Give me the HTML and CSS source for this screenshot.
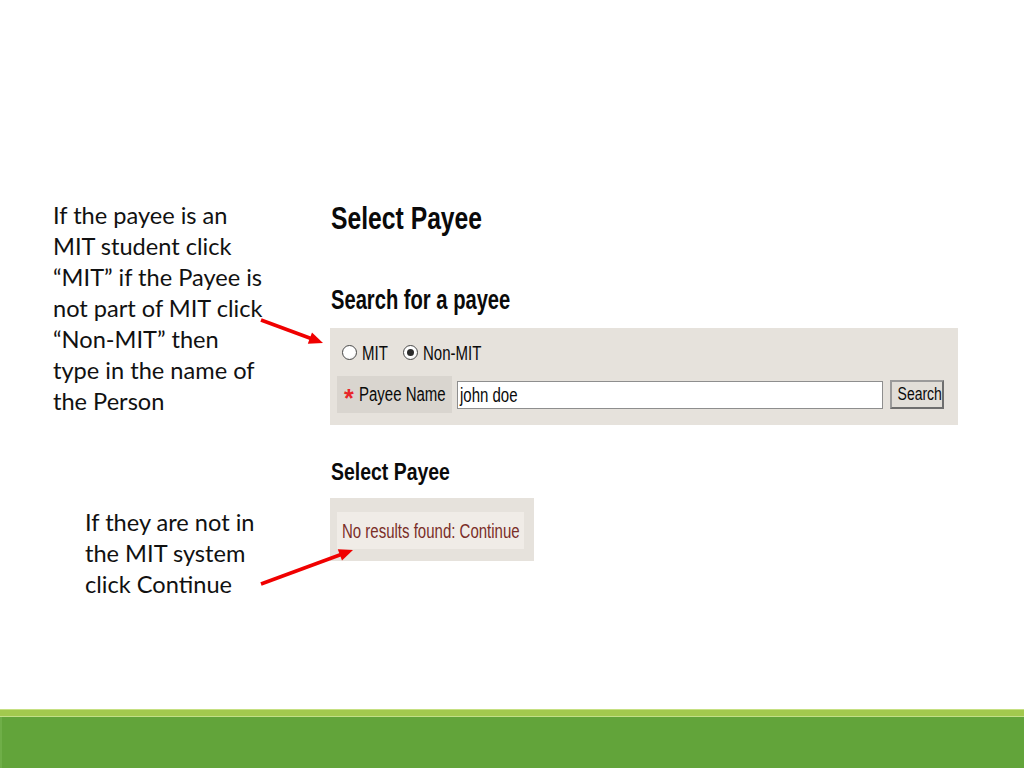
FILE: index.html
```html
<!DOCTYPE html>
<html lang="en">
<head>
<meta charset="utf-8">
<title>Select Payee</title>
<link rel="stylesheet" href="styles.css">
</head>
<body>
<div class="slide">
  <main class="content">
    <section class="row row-search">
      <p class="note note-1">If the payee is an<br>MIT student click<br>“MIT” if the Payee is<br>not part of MIT click<br>“Non-MIT” then<br>type in the name of<br>the Person</p>
      <div class="panel">
        <h1 class="h-select"><span class="squeeze squeeze-h1">Select Payee</span></h1>
        <h2 class="h-search"><span class="squeeze squeeze-h2">Search for a payee</span></h2>
        <div class="search-box">
          <div class="radios">
            <span class="radio"></span><span class="radio-label label-mit"><span class="squeeze">MIT</span></span>
            <span class="radio radio-on"></span><span class="radio-label label-non"><span class="squeeze">Non-MIT</span></span>
          </div>
          <div class="name-row">
            <div class="name-label"><span class="req">*</span><span class="label-text"><span class="squeeze">Payee Name</span></span></div>
            <div class="name-input"><span class="squeeze">john doe</span></div>
            <div class="search-btn"><span class="squeeze squeeze-center">Search</span></div>
          </div>
        </div>
      </div>
    </section>
    <section class="row row-results">
      <p class="note note-2">If they are not in<br>the MIT system<br>click Continue</p>
      <div class="panel">
        <h2 class="h-select2"><span class="squeeze squeeze-h1">Select Payee</span></h2>
        <div class="results-box"><div class="results-inner"><span class="squeeze">No results found: Continue</span></div></div>
      </div>
    </section>
  </main>
  <svg class="arrows" width="1024" height="768" viewBox="0 0 1024 768">
    <line x1="261" y1="320" x2="311" y2="338.5" stroke="#f00000" stroke-width="3.5"/>
    <polygon points="323,343 307.8,343.7 312,332.5" fill="#f00000"/>
    <line x1="261" y1="584" x2="341" y2="554.5" stroke="#f00000" stroke-width="3.5"/>
    <polygon points="353,550 342,560.5 337.8,549.3" fill="#f00000"/>
  </svg>
  <footer class="footer">
    <div class="footer-band"></div>
    <div class="footer-main"></div>
  </footer>
</div>
</body>
</html>
```
FILE: styles.css
```css
html, body {
  margin: 0;
  padding: 0;
  background: #ffffff;
}
.slide {
  position: relative;
  width: 1024px;
  height: 768px;
  overflow: hidden;
  display: flex;
  flex-direction: column;
  background: #ffffff;
}
.content {
  flex: 1;
  padding-top: 200px;
  display: flex;
  flex-direction: column;
}
.row {
  display: flex;
  align-items: flex-start;
}
.note {
  margin: 0;
  font-family: "Lato", "Open Sans", sans-serif;
  font-size: 23.6px;
  line-height: 31px;
  color: #111111;
  white-space: nowrap;
}
.note-1 {
  margin-left: 53px;
  width: 277px;
}
.note-2 {
  margin-left: 85px;
  width: 245px;
  margin-top: 82px;
}
.panel {
  display: flex;
  flex-direction: column;
  align-items: flex-start;
  font-family: "Liberation Sans", Arial, sans-serif;
  color: #0a0a0a;
}
/* the source UI uses a condensed face; squeeze Liberation Sans to match */
.squeeze {
  display: inline-block;
  white-space: nowrap;
  transform: scaleX(0.75);
  transform-origin: left center;
}
.squeeze-h1 {
  transform: scaleX(0.81);
}
.squeeze-h2 {
  transform: scaleX(0.72);
}
.squeeze-center {
  transform-origin: center center;
  transform: scaleX(0.8);
}
.h-select {
  margin: 0 0 0 1px;
  font-size: 30.5px;
  line-height: 36px;
  font-weight: bold;
}
.h-search {
  margin: 49px 0 0 1px;
  font-size: 28px;
  line-height: 30px;
  font-weight: bold;
}
.search-box {
  margin-top: 13px;
  width: 628px;
  box-sizing: border-box;
  padding: 14px 14px 12px 7px;
  background: #e6e2dc;
  display: flex;
  flex-direction: column;
  gap: 14px;
}
.radios {
  display: flex;
  align-items: center;
  height: 20px;
  margin-left: 5px;
  font-size: 20px;
}
.radio {
  width: 13px;
  height: 13px;
  flex: none;
  border: 1px solid #4a4a4a;
  border-radius: 50%;
  background: radial-gradient(circle at 40% 35%, #ffffff 55%, #e4e4e4 100%);
  display: flex;
  align-items: center;
  justify-content: center;
}
.radio-on::after {
  content: "";
  width: 7px;
  height: 7px;
  border-radius: 50%;
  background: #2b2b2b;
}
.radio-label {
  margin-left: 5px;
  white-space: nowrap;
  position: relative;
  top: 1px;
}
.label-mit {
  width: 26px;
  margin-right: 15px;
}
.label-non {
  width: 58px;
}
.name-row {
  display: flex;
  align-items: center;
  height: 37px;
}
.name-label {
  width: 115px;
  height: 37px;
  box-sizing: border-box;
  background: #d9d5cf;
  display: flex;
  align-items: center;
  padding-left: 7px;
  font-size: 20px;
}
.req {
  color: #e8262a;
  font-size: 25px;
  font-weight: bold;
  margin-right: 5px;
  position: relative;
  top: 4px;
}
.label-text {
  width: 87px;
  white-space: nowrap;
}
.name-input {
  margin-left: 5px;
  width: 426px;
  height: 28px;
  box-sizing: border-box;
  border: 1px solid #8e8e8e;
  background: #ffffff;
  padding-left: 2px;
  font-size: 20px;
  line-height: 26px;
}
.search-btn {
  margin-left: 7px;
  width: 54px;
  height: 29px;
  box-sizing: border-box;
  border: 2px solid;
  border-color: #9a9a9a #6e6e6e #6e6e6e #9a9a9a;
  background: #e1ded8;
  font-size: 17.5px;
  line-height: 25px;
  text-align: center;
}
.h-select2 {
  margin: 33px 0 0 1px;
  font-size: 24px;
  line-height: 28px;
  font-weight: bold;
}
.results-box {
  margin-top: 12px;
  width: 204px;
  box-sizing: border-box;
  padding: 14px 10px 12px 7px;
  background: #e6e2dc;
}
.results-inner {
  height: 37px;
  background: #f0ece7;
  padding-left: 5px;
  font-size: 20px;
  line-height: 38px;
  color: #7a2e28;
  white-space: nowrap;
}
.arrows {
  position: absolute;
  left: 0;
  top: 0;
  pointer-events: none;
}
.footer {
  height: 59px;
  display: flex;
  flex-direction: column;
}
.footer-band {
  height: 6px;
  background: #a2c94e;
  border-top: 1px solid #c6e083;
  border-bottom: 1px solid #c2df86;
}
.footer-main {
  flex: 1;
  background: #62a43a;
  border-left: 2px solid #6fae48;
}
```
